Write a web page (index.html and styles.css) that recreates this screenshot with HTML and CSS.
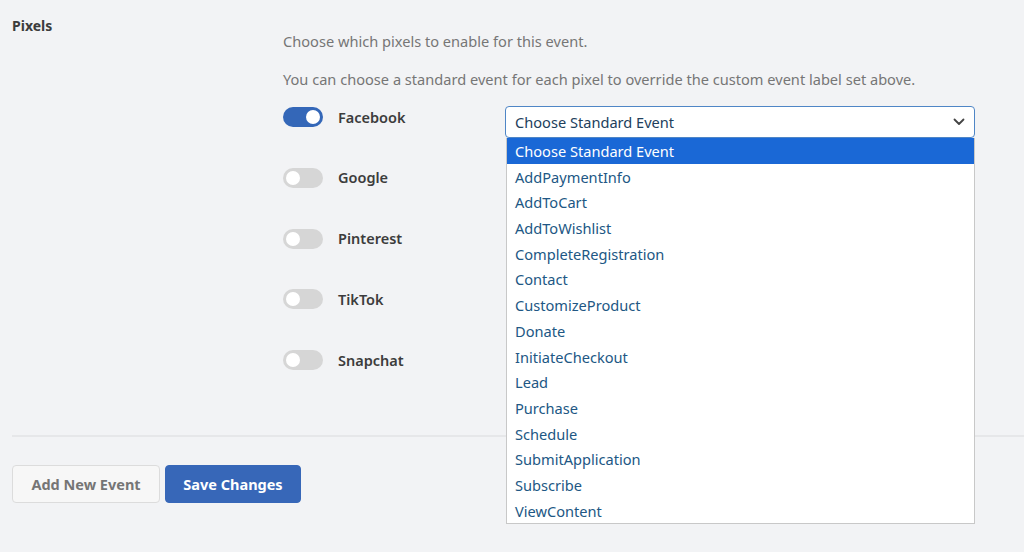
FILE: index.html
```html
<!DOCTYPE html>
<html>
<head>
<meta charset="utf-8">
<link rel="stylesheet" href="styles.css">
</head>
<body>
<div class="page">
  <section class="field">
    <div class="field-label">Pixels</div>
    <div class="field-body">
      <p class="desc first">Choose which pixels to enable for this event.</p>
      <p class="desc">You can choose a standard event for each pixel to override the custom event label set above.</p>
      <div class="rows">
        <div class="row">
          <div class="pix">
            <span class="toggle on"><span class="knob"></span></span>
            <span class="pix-name">Facebook</span>
          </div>
          <div class="select-wrap">
            <div class="select">
              <span>Choose Standard Event</span>
              <svg class="chev" width="12" height="8" viewBox="0 0 12 8"><path d="M1.5 1.5 L6 6 L10.5 1.5" fill="none" stroke="#444" stroke-width="1.8" stroke-linecap="round" stroke-linejoin="round"/></svg>
            </div>
            <ul class="menu">
              <li class="active">Choose Standard Event</li>
              <li>AddPaymentInfo</li>
              <li>AddToCart</li>
              <li>AddToWishlist</li>
              <li>CompleteRegistration</li>
              <li>Contact</li>
              <li>CustomizeProduct</li>
              <li>Donate</li>
              <li>InitiateCheckout</li>
              <li>Lead</li>
              <li>Purchase</li>
              <li>Schedule</li>
              <li>SubmitApplication</li>
              <li>Subscribe</li>
              <li>ViewContent</li>
            </ul>
          </div>
        </div>
        <div class="row">
          <div class="pix">
            <span class="toggle"><span class="knob"></span></span>
            <span class="pix-name">Google</span>
          </div>
        </div>
        <div class="row">
          <div class="pix">
            <span class="toggle"><span class="knob"></span></span>
            <span class="pix-name">Pinterest</span>
          </div>
        </div>
        <div class="row">
          <div class="pix">
            <span class="toggle"><span class="knob"></span></span>
            <span class="pix-name">TikTok</span>
          </div>
        </div>
        <div class="row">
          <div class="pix">
            <span class="toggle"><span class="knob"></span></span>
            <span class="pix-name">Snapchat</span>
          </div>
        </div>
      </div>
    </div>
  </section>
  <div class="actions">
    <button class="btn btn-secondary">Add New Event</button>
    <button class="btn btn-primary">Save Changes</button>
  </div>
</div>
</body>
</html>
```
FILE: styles.css
```css
* { box-sizing: border-box; }
html, body {
  margin: 0;
  padding: 0;
  background: #f2f3f5;
  font-family: "Noto Sans", "Open Sans", sans-serif;
  height: 100%;
  overflow: hidden;
}
.page {
  padding: 16px 0 0 12px;
}
.field {
  display: flex;
  border-bottom: 2px solid #e6e7e9;
  padding-bottom: 25px;
}
.field-label {
  width: 271px;
  flex: none;
  font-size: 14px;
  font-weight: 700;
  line-height: 20px;
  color: #3c3c3c;
}
.field-body {
  flex: 1;
}
.desc {
  margin: 0 0 16px;
  font-size: 14.6px;
  line-height: 22px;
  color: #767676;
}
.desc.first { margin-top: 14px; }
.rows {
  display: flex;
  flex-direction: column;
}
.row {
  height: 60.75px;
  display: flex;
  align-items: flex-start;
}
.pix {
  width: 222px;
  flex: none;
  display: flex;
  align-items: center;
  gap: 15px;
  margin-top: 1px;
  height: 20px;
}
.toggle {
  width: 40px;
  height: 20px;
  border-radius: 10px;
  background: #d6d6d6;
  position: relative;
  flex: none;
}
.toggle.on { background: #3467b8; }
.knob {
  position: absolute;
  top: 3px;
  left: 3px;
  width: 14px;
  height: 14px;
  border-radius: 50%;
  background: #fff;
}
.toggle.on .knob { left: 23px; }
.pix-name {
  font-size: 14.5px;
  font-weight: 600;
  line-height: 20px;
  margin-top: -1px;
  color: #3c3c3c;
}
.select-wrap {
  position: relative;
  width: 470px;
}
.select {
  height: 32px;
  border: 1px solid #4f86c6;
  border-radius: 4px;
  background: #fff;
  display: flex;
  align-items: center;
  justify-content: space-between;
  padding: 0 9px 0 9px;
  font-size: 14.6px;
  color: #22405c;
}
.menu {
  position: absolute;
  top: 32px;
  left: 1px;
  right: 0;
  margin: 0;
  padding: 0;
  list-style: none;
  background: #fff;
  border: 1px solid #c8c8c8;
  border-top: none;
  z-index: 2;
}
.menu li {
  height: 25.7px;
  line-height: 23.7px;
  padding-top: 2px;
  padding-left: 8px;
  font-size: 14.6px;
  color: #215784;
}
.menu li.active {
  background: #1a68d6;
  color: #fff;
}
.actions {
  display: flex;
  gap: 5px;
  padding-top: 28px;
}
.btn {
  height: 38px;
  border-radius: 4px;
  font-family: inherit;
  font-size: 14.5px;
  font-weight: 700;
  padding: 0;
  cursor: pointer;
}
.btn-secondary {
  width: 148px;
  background: #f7f7f7;
  border: 1px solid #dcdcdc;
  color: #757575;
}
.btn-primary {
  width: 136px;
  background: #3767b8;
  border: 1px solid #3767b8;
  color: #fff;
}
```
